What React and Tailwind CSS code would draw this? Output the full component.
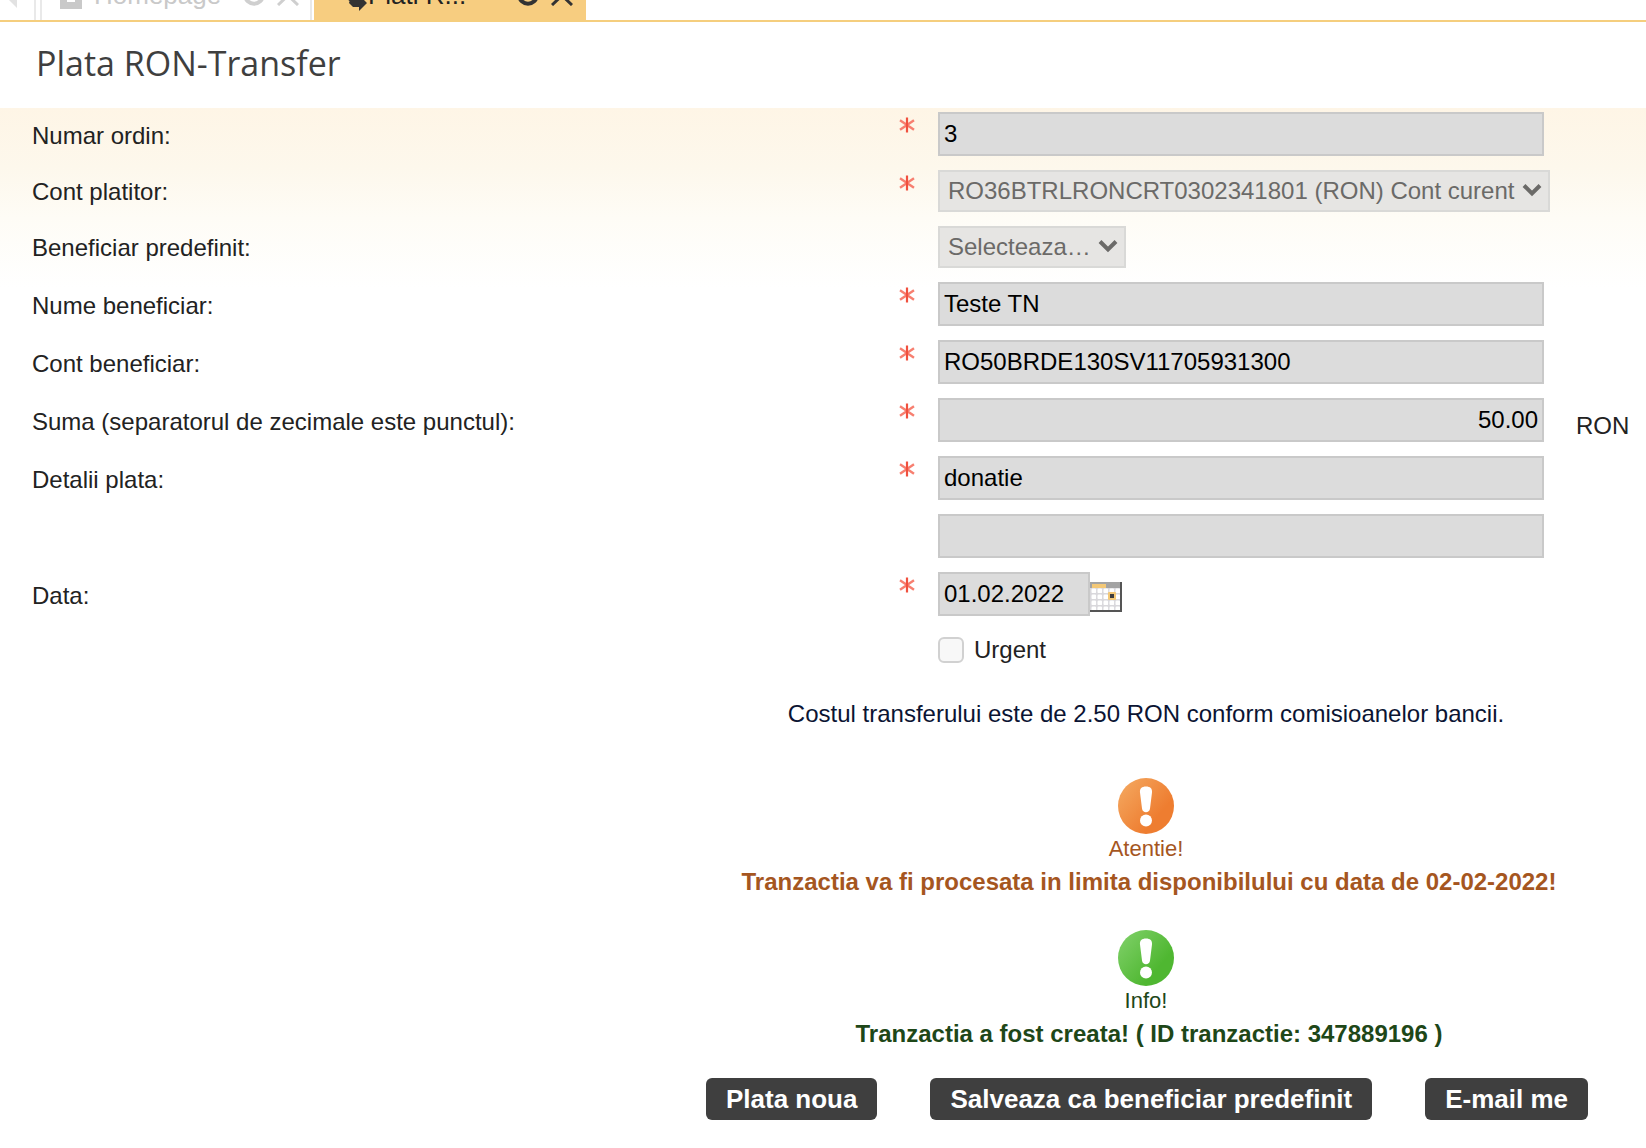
import React from 'react';

const inputClass =
  'block h-11 w-full border-2 border-[#c9c9c9] bg-[#dcdcdc] px-1 text-2xl leading-8 text-black outline-none';
const selectClass =
  'h-[42px] appearance-none border-2 border-[#d9d9d7] bg-[#e6e5e3] pl-2 text-2xl leading-8 text-[#6b6a68]';

function Required() {
  return (
    <svg className="size-4" viewBox="0 0 16 16" role="img" aria-label="obligatoriu">
      <path d="M1 3.200 15 12.800M15 3.200 1 12.800" stroke="#f77f70" strokeWidth="2.400" fill="none" />
      <path d="M8 0.500v15" stroke="#f0503e" strokeWidth="2.200" />
    </svg>
  );
}

function Row({ id, label, required, children, after, tall = true }) {
  return (
    <div className="grid grid-cols-[minmax(0,1fr)_48px_708px] items-start">
      <label htmlFor={id} className={tall ? 'pt-2 leading-8' : 'pt-1.5 leading-8'}>
        {label}
      </label>
      <div className="flex justify-center pt-[5px] pr-3.5">{required && <Required />}</div>
      <div className="flex items-start">
        {children}
        {after}
      </div>
    </div>
  );
}

function Select({ id, text, width }) {
  return (
    <div className={'grid ' + width}>
      <select id={id} disabled className={'col-start-1 row-start-1 w-full ' + selectClass}>
        <option>{text}</option>
      </select>
      <svg className="pointer-events-none col-start-1 row-start-1 mt-3.5 mr-2 h-3.5 w-5 justify-self-end" viewBox="0 0 20 14">
        <path d="M2 1.500 10 9.500 18 1.500" fill="none" stroke="#6b6a68" strokeWidth="4" />
      </svg>
    </div>
  );
}

function Calendar() {
  const cells = [];
  for (let r = 0; r < 4; r++)
    for (let c = 0; c < 5; c++) cells.push(<rect key={r + '-' + c} x={1.5 + c * 6} y={6.5 + r * 6} width="4.600" height="4.600" rx="1.200" fill="#fff" />);
  return (
    <svg className="h-[30px] w-8" viewBox="0 0 32 30">
      <rect width="32" height="30" fill="#d9d8dc" />
      <rect width="32" height="6" fill="#a3a3a3" />
      <rect x="2" y="2" width="14" height="4" fill="#f3c877" />
      {cells}
      <rect x="18" y="10" width="8" height="8" rx="1" fill="#f3c877" />
      <rect x="20" y="12" width="4" height="4" fill="#3d3d3d" />
      <path d="M31 0v29H0" fill="none" stroke="#555" strokeWidth="2" />
    </svg>
  );
}

function Badge({ id, from, to }) {
  return (
    <svg className="mx-auto block size-14" viewBox="0 0 56 56" aria-hidden="true">
      <defs>
        <linearGradient id={id} x1="0" y1="0.1" x2="0.7" y2="0.7">
          <stop offset="0" stopColor={from} />
          <stop offset="1" stopColor={to} />
        </linearGradient>
      </defs>
      <circle cx="28" cy="28" r="28" fill={`url(#${id})`} />
      <path d="M28 8.500c4.200 0 6.400 2 6 6l-2 16c-.5 5-7.500 5-8 0L22 14.500c-.4-4 1.800-6 6-6Z" fill="#fff" />
      <circle cx="28" cy="42.500" r="6" fill="#fff" />
    </svg>
  );
}

function TabIcons({ color }) {
  return (
    <>
      <svg className="size-[22px] shrink-0" viewBox="0 0 22 22">
        <path d="M4 5a9 9 0 1 0 14 0" fill="none" stroke={color} strokeWidth="4" />
      </svg>
      <svg className="ml-3 size-[22px] shrink-0" viewBox="0 0 22 22">
        <path d="M1 2 21 21M21 2 1 21" stroke={color} strokeWidth="3" />
      </svg>
    </>
  );
}

function ActionButton({ children }) {
  return (
    <button type="button" className="h-[42px] rounded-md bg-[#3f3f3f] px-5 text-[26px] leading-8 font-bold text-white">
      {children}
    </button>
  );
}

const tabClass = 'flex h-10 w-[272px] shrink-0 items-center border-x-2 pr-[11px] pb-2.5 text-[26px] leading-8';

export default function App() {
  return (
    <div className="min-h-screen bg-white font-['Liberation_Sans',Arial,sans-serif] text-2xl text-[#222]">
      <nav className="flex h-[22px] items-end overflow-hidden border-b-2 border-[#f5ce7e]">
        <div className="flex h-10 w-9 shrink-0 items-center border-r-2 border-[#e9e9e9]">
          <svg className="h-8 w-5" viewBox="0 0 20 32">
            <path d="M17 0v24L5 12Z" fill="#e2e2e2" />
          </svg>
        </div>
        <button type="button" className={'ml-1 border-[#e9e9e9] pl-[18px] text-[#c9c9c9] ' + tabClass}>
          <svg className="h-7 w-[22px] shrink-0" viewBox="0 0 22 28">
            <path d="M0 8 11 0l11 8v20H0ZM7 12v9h8v-9Z" fill="#c9c9c9" fillRule="evenodd" />
          </svg>
          <span className="ml-3 flex-1 text-left">Homepage</span>
          <TabIcons color="#cfcfcf" />
        </button>
        <button type="button" className={'ml-0.5 border-[#f7cd80] bg-[#f7cd80] pl-[26px] text-[#222] ' + tabClass}>
          <svg className="h-8 w-[26px] shrink-0" viewBox="0 0 26 32">
            <path d="M0 16 10 8v16ZM8 20h8v-5l9 9-8 8v-4h-6l-4-4Z" fill="#333" />
          </svg>
          <span className="flex-1 text-left">Plati R...</span>
          <TabIcons color="#333" />
        </button>
      </nav>
      <header className="flex h-[86px] items-center px-9 pb-1">
        <h1 className="font-['Open_Sans',sans-serif] text-[34px] leading-10 font-medium text-[#3f3f3f]">Plata RON-Transfer</h1>
      </header>
      <form className="bg-[linear-gradient(#fef5e6,#fdf8ec_60px,#fefcf6_110px,#fff_180px)] pt-1 pl-8">
        <div className="flex flex-col gap-3.5">
          <Row id="ordin" label="Numar ordin:" required>
            <div className="w-[606px]"><input id="ordin" readOnly defaultValue="3" className={inputClass} /></div>
          </Row>
          <Row id="platitor" label="Cont platitor:" required tall={false}>
            <Select id="platitor" text="RO36BTRLRONCRT0302341801 (RON) Cont curent" width="w-[612px]" />
          </Row>
          <Row id="predefinit" label="Beneficiar predefinit:" tall={false}>
            <Select id="predefinit" text="Selecteaza…" width="w-[188px]" />
          </Row>
          <Row id="nume" label="Nume beneficiar:" required>
            <div className="w-[606px]"><input id="nume" readOnly defaultValue="Teste TN" className={inputClass} /></div>
          </Row>
          <Row id="cont" label="Cont beneficiar:" required>
            <div className="w-[606px]"><input id="cont" readOnly defaultValue="RO50BRDE130SV11705931300" className={inputClass} /></div>
          </Row>
          <Row id="suma" label="Suma (separatorul de zecimale este punctul):" required after={<span className="pt-3 pl-8 leading-8">RON</span>}>
            <div className="w-[606px]"><input id="suma" readOnly defaultValue="50.00" className={inputClass + ' text-right'} /></div>
          </Row>
          <Row id="detalii" label="Detalii plata:" required>
            <div className="w-[606px]"><input id="detalii" readOnly defaultValue="donatie" className={inputClass} /></div>
          </Row>
          <Row id="detalii2" label="">
            <div className="w-[606px]"><input id="detalii2" aria-label="Detalii plata, randul 2" readOnly defaultValue="" className={inputClass} /></div>
          </Row>
          <Row id="data" label="Data:" required after={<button type="button" aria-label="Calendar" className="mt-2.5"><Calendar /></button>}>
            <div className="w-[152px]"><input id="data" readOnly defaultValue="01.02.2022" className={inputClass} /></div>
          </Row>
        </div>
        <div className="grid grid-cols-[minmax(0,1fr)_708px] pt-[18px]">
          <label className="col-start-2 flex items-center gap-2.5 leading-8">
            <input type="checkbox" disabled className="size-[26px] appearance-none rounded-md border-2 border-[#d1d1d1] bg-[#f8f8f8]" />
            Urgent
          </label>
        </div>
        <section className="ml-auto w-[1000px] max-w-full text-center">
          <p className="pt-8 leading-8 text-[#0b1433]">Costul transferului este de 2.50 RON conform comisioanelor bancii.</p>
          <div className="pt-12 text-[#a5561f]">
            <Badge id="warn" from="#f4a860" to="#ee7d30" />
            <p className="text-[22px] leading-[30px]">Atentie!</p>
            <p className="pt-0.5 pl-1.5 leading-8 font-bold">Tranzactia va fi procesata in limita disponibilului cu data de 02-02-2022!</p>
          </div>
          <div className="pt-8 text-[#1e4718]">
            <Badge id="info" from="#7fd068" to="#4fb731" />
            <p className="text-[22px] leading-[30px]">Info!</p>
            <p className="pt-0.5 pl-1.5 leading-8 font-bold">Tranzactia a fost creata! ( ID tranzactie: 347889196 )</p>
          </div>
          <div className="flex justify-center gap-[53px] pt-7 pb-7 pl-0.5">
            <ActionButton>Plata noua</ActionButton>
            <ActionButton>Salveaza ca beneficiar predefinit</ActionButton>
            <ActionButton>E-mail me</ActionButton>
          </div>
        </section>
      </form>
    </div>
  );
}
